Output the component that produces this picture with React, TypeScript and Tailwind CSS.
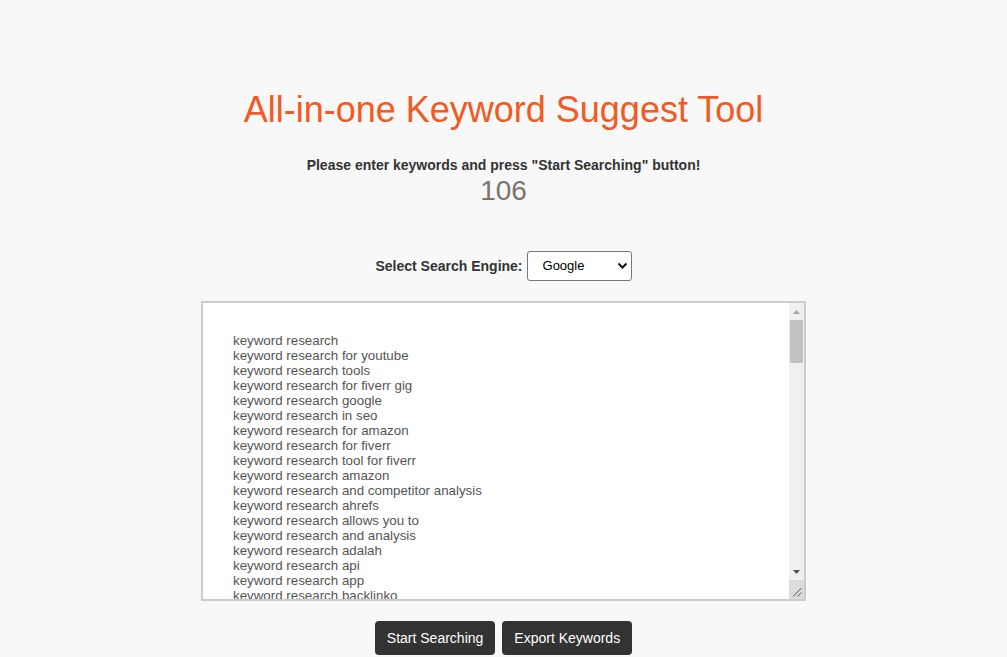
import { useState } from 'react';

const keywords = [
  'keyword research',
  'keyword research for youtube',
  'keyword research tools',
  'keyword research for fiverr gig',
  'keyword research google',
  'keyword research in seo',
  'keyword research for amazon',
  'keyword research for fiverr',
  'keyword research tool for fiverr',
  'keyword research amazon',
  'keyword research and competitor analysis',
  'keyword research ahrefs',
  'keyword research allows you to',
  'keyword research and analysis',
  'keyword research adalah',
  'keyword research api',
  'keyword research app',
  'keyword research backlinko',
  'keyword research blog',
  'keyword research book',
  'keyword research for beginners',
  'keyword research bangla',
  'keyword research best practices',
  'keyword research basics',
  'keyword research chrome extension',
  'keyword research course',
  'keyword research checklist',
  'keyword research competitor',
  'keyword research cost',
  'keyword research definition',
  'keyword research done for you',
  'keyword research deliverables',
  'keyword research etsy',
  'keyword research example',
  'keyword research excel template',
  'keyword research ebay',
  'keyword research free',
  'keyword research for blog',
  'keyword research for seo',
  'keyword research for ppc',
  'keyword research google ads',
  'keyword research guide',
  'keyword research google trends',
  'keyword research hindi',
  'keyword research how to',
  'keyword research hubspot',
  'keyword research in digital marketing',
  'keyword research instagram',
  'keyword research intent',
  'keyword research jobs',
  'keyword research jaaxy',
  'keyword research kwfinder',
  'keyword research keyword planner',
  'keyword research local seo',
  'keyword research long tail',
  'keyword research meaning',
  'keyword research moz',
  'keyword research methods',
  'keyword research near me',
  'keyword research niche',
  'keyword research online',
  'keyword research on fiverr',
  'keyword research pdf',
  'keyword research process',
  'keyword research pinterest',
  'keyword research questions',
  'keyword research quora',
  'keyword research report',
  'keyword research reddit',
  'keyword research semrush',
  'keyword research strategy',
  'keyword research services',
  'keyword research software',
  'keyword research steps',
  'keyword research template',
  'keyword research tips',
  'keyword research tutorial',
  'keyword research ubersuggest',
  'keyword research udemy',
  'keyword research upwork',
  'keyword research video',
  'keyword research vs seo',
  'keyword research website',
  'keyword research wordpress',
  'keyword research with google',
  'keyword research youtube',
  'keyword research youtube channel',
  'keyword research yoast',
  'keyword research zoom',
  'keyword research 2023',
  'keyword research 2024',
  'keyword research 101',
  'keyword research analysis tool',
  'keyword research bing',
  'keyword research company',
  'keyword research difficulty',
  'keyword research expert',
  'keyword research funnel',
  'keyword research google sheets',
  'keyword research hacks',
  'keyword research ideas',
  'keyword research journey',
  'keyword research kit',
  'keyword research list',
  'keyword research mistakes',
  'keyword research ninja',
];

// fake classic scrollbar, the headless browser hides native ones
function ScrollBar() {
  return (
    <div className="flex w-[15px] flex-col bg-[#f0f0f0]">
      <div className="flex h-[17px] items-center justify-center">
        <svg width="7" height="4" viewBox="0 0 7 4">
          <path d="M0 4 L3.5 0 L7 4 Z" fill="#a3a3a3" />
        </svg>
      </div>
      <div className="mx-[1px] h-[43px] bg-[#c1c1c1]" />
      <div className="flex-1" />
      <div className="flex h-[17px] items-center justify-center">
        <svg width="7" height="4" viewBox="0 0 7 4">
          <path d="M0 0 L7 0 L3.5 4 Z" fill="#505050" />
        </svg>
      </div>
      <div className="flex h-[19px] items-end justify-end bg-[#dcdcdc] p-[2px]">
        <svg width="10" height="10" viewBox="0 0 10 10">
          <path d="M9.5 1 L1 9.5 M9.5 5.5 L5.5 9.5" stroke="#555" strokeWidth="1" />
        </svg>
      </div>
    </div>
  );
}

export default function App() {
  const [engine, setEngine] = useState('Google');

  return (
    <div className="min-h-screen bg-[#f8f8f8] font-['Liberation_Sans',Arial,sans-serif] text-[#333]">
      <div className="flex flex-col items-center">
        <h1 className="mt-[90px] text-[36px] leading-[40px] text-[#f15a22]">
          All-in-one Keyword Suggest Tool
        </h1>
        <p className="mt-[25px] text-[14px] leading-[20px] font-bold text-[#333]">
          Please enter keywords and press "Start Searching" button!
        </p>
        <div className="text-[28px] leading-[31px] text-[#7a756a]">106</div>

        <div className="mt-[45px] flex items-center gap-1">
          <label className="text-[14px] font-bold text-[#333]">Select Search Engine:</label>
          <div className="relative">
            <select
              value={engine}
              onChange={(e) => setEngine(e.target.value)}
              className="h-[30px] w-[105px] appearance-none rounded-[3px] border border-[#777] bg-white pl-[15px] text-[13px] text-black outline-none"
            >
              <option>Google</option>
              <option>Bing</option>
              <option>YouTube</option>
              <option>Amazon</option>
            </select>
            <svg
              className="pointer-events-none absolute right-[4px] top-[10px]"
              width="11"
              height="9"
              viewBox="0 0 11 9"
            >
              <path d="M1.5 2.5 L5.5 6.5 L9.5 2.5" fill="none" stroke="#111" strokeWidth="2" />
            </svg>
          </div>
        </div>

        <div className="mt-[20px] flex h-[300px] w-[605px] border-2 border-[#ccc] bg-white">
          <textarea
            readOnly
            value={'\n' + keywords.join('\n')}
            className="min-w-0 flex-1 resize-none overflow-hidden bg-white pl-[30px] pr-[10px] pt-[15px] pb-[10px] text-[13.33px] leading-[15px] text-[#555] outline-none"
          />
          <ScrollBar />
        </div>

        <div className="mt-[20px] flex gap-[7px]">
          <button className="h-[34px] rounded-[4px] bg-[#333] px-[12px] text-[14px] text-white">
            Start Searching
          </button>
          <button className="h-[34px] rounded-[4px] bg-[#333] px-[12px] text-[14px] text-white">
            Export Keywords
          </button>
        </div>
      </div>
    </div>
  );
}
